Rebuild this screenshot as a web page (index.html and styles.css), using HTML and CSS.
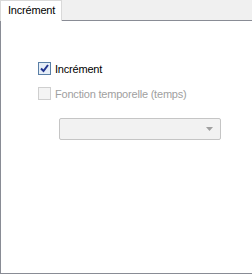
FILE: index.html
```html
<!DOCTYPE html>
<html>
<head>
<meta charset="utf-8">
<link rel="stylesheet" href="styles.css">
</head>
<body>
<div class="window">
  <div class="tabstrip">
    <div class="tab">Incrément</div>
    <div class="tabfill"></div>
  </div>
  <div class="panel">
    <label class="check">
      <span class="box checked">
        <svg width="9" height="9" viewBox="0 0 9 9"><path d="M1 4.5 L3.5 7 L8 1" fill="none" stroke="#21348f" stroke-width="2"/></svg>
      </span>
      <span class="lbl">Incrément</span>
    </label>
    <label class="check disabled">
      <span class="box"></span>
      <span class="lbl">Fonction temporelle (temps)</span>
    </label>
    <div class="select">
      <svg class="arrow" width="7" height="4" viewBox="0 0 7 4"><path d="M0 0 H7 L3.5 4 Z" fill="#a0a0a0"/></svg>
    </div>
  </div>
</div>
</body>
</html>
```
FILE: styles.css
```css
html, body {
  margin: 0;
  padding: 0;
  background: #ffffff;
}
.window {
  width: 252px;
  height: 275px;
  display: flex;
  flex-direction: column;
  font-family: "Liberation Sans", Arial, sans-serif;
  font-size: 11px;
}
.tabstrip {
  display: flex;
  height: 21px;
  background: #f0f0f0;
}
.tab {
  width: 62px;
  height: 21px;
  box-sizing: border-box;
  border: 1px solid #d9d9d9;
  border-bottom: none;
  background: #ffffff;
  padding: 3px 0 0 7px;
  letter-spacing: -0.2px;
  color: #000000;
  margin-bottom: -1px;
  position: relative;
  z-index: 1;
}
.tabfill {
  flex: 1;
  border-bottom: 1px solid #898c95;
}
.panel {
  height: 253px;
  box-sizing: border-box;
  border-left: 1px solid #898c95;
  border-bottom: 1px solid #898c95;
  display: flex;
  flex-direction: column;
  padding: 41px 0 0 37px;
}
.check {
  display: flex;
  align-items: center;
  gap: 4px;
  height: 13px;
  margin-bottom: 12px;
  letter-spacing: -0.2px;
}
.box {
  width: 13px;
  height: 13px;
  box-sizing: border-box;
  border: 1px solid #8e8f8f;
  background: #ffffff;
  display: flex;
  align-items: center;
  justify-content: center;
}
.box.checked {
  border-color: #5a7fa6;
  background: #e6eef7;
}
.disabled .box {
  border-color: #cfcfcf;
  background: #f4f4f4;
}
.disabled .lbl {
  color: #a0a0a0;
}
.select {
  margin: 6px 0 0 21px;
  width: 162px;
  height: 22px;
  box-sizing: border-box;
  border: 1px solid #c5c5c5;
  border-radius: 2px;
  background: #f2f2f2;
  display: flex;
  align-items: center;
  justify-content: flex-end;
  padding-right: 7px;
}
```
